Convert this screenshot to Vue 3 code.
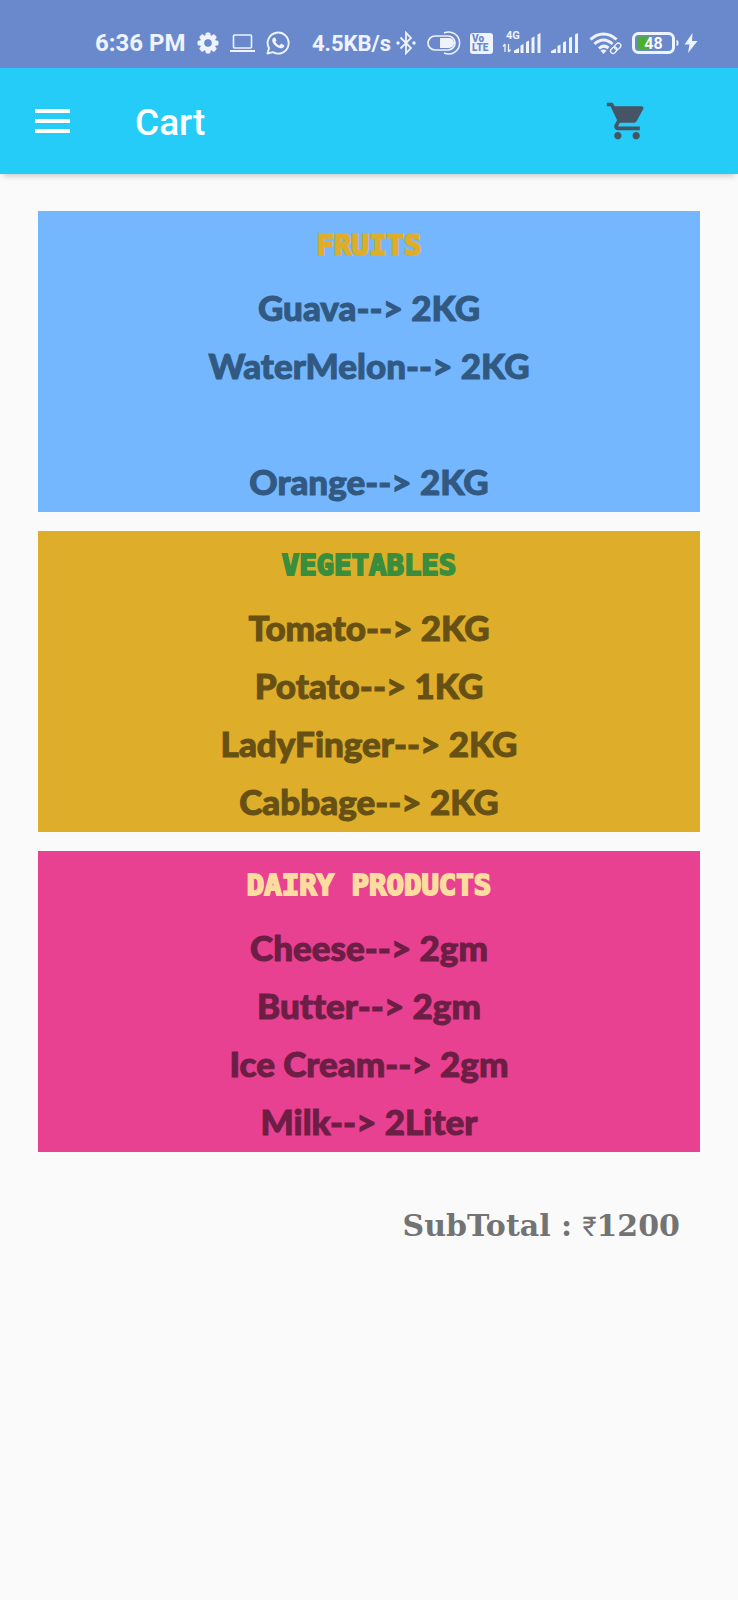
<script setup>
const sections = [
  {
    id: 'fruits',
    title: 'FRUITS',
    items: ['Guava--> 2KG', 'WaterMelon--> 2KG', '', 'Orange--> 2KG'],
  },
  {
    id: 'vegetables',
    title: 'VEGETABLES',
    items: ['Tomato--> 2KG', 'Potato--> 1KG', 'LadyFinger--> 2KG', 'Cabbage--> 2KG'],
  },
  {
    id: 'dairy',
    title: 'DAIRY PRODUCTS',
    items: ['Cheese--> 2gm', 'Butter--> 2gm', 'Ice Cream--> 2gm', 'Milk--> 2Liter'],
  },
]
</script>

<template>
  <div class="screen">
    <div class="status">
      <div class="status-left">
        <span class="clock">6:36 PM</span>
        <svg width="22" height="22" viewBox="0 0 22 22" aria-hidden="true">
          <g fill="#eef3ff">
            <rect x="8.500" y="0.500" width="5" height="21" rx="1.500" />
            <rect x="8.500" y="0.500" width="5" height="21" rx="1.500" transform="rotate(45 11 11)" />
            <rect x="8.500" y="0.500" width="5" height="21" rx="1.500" transform="rotate(90 11 11)" />
            <rect x="8.500" y="0.500" width="5" height="21" rx="1.500" transform="rotate(135 11 11)" />
            <circle cx="11" cy="11" r="8" />
          </g>
          <circle cx="11" cy="11" r="3.800" fill="#6a89cc" />
        </svg>
        <svg width="25" height="20" viewBox="0 0 25 20" fill="none" stroke="#eef3ff" stroke-width="1.6" aria-hidden="true">
          <rect x="3.500" y="2" width="18" height="13" rx="1" />
          <path d="M0 18h25" stroke-width="2" />
        </svg>
        <svg width="24" height="24" viewBox="0 0 24 24" aria-hidden="true">
          <path d="M1.500 22.500L3 17.200A10.500 10.500 0 1 1 7 21.200Z" fill="none" stroke="#eef3ff" stroke-width="1.900" stroke-linejoin="round" />
          <path d="M8.200 6.500c.5-.2 1-.1 1.200.4l.9 2c.2.400 0 .8-.9 1.900 1 1.900 2.300 3 4.200 3.800l1.200-1.500c.3-.4.6-.4 1-.2l2 1c.6.3.6.6.4 1.300-.5 1.500-2 2.300-3.600 2.100-4-.6-7.800-4.300-8.400-7.600-.2-1.300.7-2.700 2-3.200z" fill="#eef3ff" />
        </svg>
      </div>
      <div class="status-right">
        <div class="net">
          <span class="speed">4.5KB/s</span>
          <svg width="22" height="24" viewBox="0 0 22 24" aria-hidden="true">
            <path d="M4.500 6.500L15 17L10 22.200V1.800L15 7L4.500 17.500" fill="none" stroke="#eef3ff" stroke-width="1.800" />
            <circle cx="2" cy="12" r="1.700" fill="#eef3ff" />
            <circle cx="18" cy="12" r="1.700" fill="#eef3ff" />
          </svg>
        </div>
        <svg width="34" height="24" viewBox="0 0 34 24" fill="none" stroke="#eef3ff" aria-hidden="true">
          <rect x="1" y="5" width="27" height="14" rx="7" stroke-width="1.700" />
          <path d="M13 7h9a5 5 0 0 1 0 10H13z" fill="#eef3ff" stroke="none" />
          <path d="M17 2A11 11 0 1 1 17 22" stroke-width="1.500" />
        </svg>
        <span class="volte"><span>Vo</span><span>LTE</span></span>
        <svg width="40" height="26" viewBox="0 0 40 26" aria-hidden="true">
          <text x="4" y="9" class="tiny">4G</text>
          <path d="M3 22V14M1 16.500L3 14M6.500 14V22M8.500 19.500L6.500 22" stroke="#eef3ff" stroke-width="1.300" fill="none" />
          <path d="M12 20.500l5-2.500v5h-5zM18.500 15.500l3-1.500V23h-3zM24 12l3-1.500V23h-3zM29.500 8l3-1.500V23h-3zM35.500 4.500l3-1.500V23h-3z" fill="#eef3ff" />
        </svg>
        <svg width="29" height="26" viewBox="0 0 29 26" aria-hidden="true">
          <path d="M0 21l5-2.500V23H0zM6.500 16l3-1.500V23h-3zM12 12.500l3-1.500V23h-3zM18 8l3-1.500V23h-3zM24 4.500l3-1.500V23h-3z" fill="#eef3ff" />
        </svg>
        <svg width="34" height="26" viewBox="0 0 34 26" fill="none" stroke="#eef3ff" aria-hidden="true">
          <path d="M1.500 9.500C9 2 20 2 27.500 9.500M5.500 14C11 8.500 18 8.500 23.500 14M10 18.500C13 15.500 16.500 15.500 19.500 18" stroke-width="3" />
          <path d="M11.500 20.500l3 3.500 3-3.500q-3-2-6 0z" fill="#eef3ff" stroke="none" />
          <g stroke-width="1.300" transform="rotate(-45 26.500 18.500)">
            <rect x="20.500" y="16" width="7" height="5" rx="2.500" />
            <rect x="26" y="16" width="7" height="5" rx="2.500" />
          </g>
        </svg>
        <div class="power">
          <svg width="47" height="22" viewBox="0 0 47 22" aria-hidden="true">
            <rect x="1.500" y="1.500" width="40" height="19" rx="5" fill="none" stroke="#eef3ff" stroke-width="3" />
            <path d="M5 4.500h15v13H7q-2 0-2-2z" fill="#4caf2f" />
            <path d="M44.500 8q2 0 2 3t-2 3z" fill="#eef3ff" />
            <text x="21.500" y="16.500" text-anchor="middle" class="charge">48</text>
          </svg>
          <svg width="14" height="20" viewBox="0 0 14 20" aria-hidden="true">
            <path d="M8.500 0L.5 11.500h5L4 20l9.500-12H8z" fill="#eef3ff" />
          </svg>
        </div>
      </div>
    </div>

    <header class="bar">
      <button class="icon-button" type="button" aria-label="Menu">
        <svg width="35" height="24" viewBox="0 0 35 24" aria-hidden="true">
          <path d="M0 0h35v4H0zM0 10h35v4H0zM0 20h35v4H0z" fill="#fff" />
        </svg>
      </button>
      <h1>Cart</h1>
      <button class="icon-button cart" type="button" aria-label="Cart">
        <svg width="44" height="44" viewBox="0 0 24 24" aria-hidden="true">
          <path fill="#455565" d="M7 18c-1.100 0-1.990.9-1.990 2S5.900 22 7 22s2-.9 2-2-.9-2-2-2zM1 2v2h2l3.600 7.590-1.350 2.450c-.16.280-.25.610-.25.960 0 1.100.9 2 2 2h12v-2H7.420c-.14 0-.25-.11-.25-.25l.03-.12.900-1.630h7.450c.75 0 1.410-.41 1.750-1.030l3.580-6.490c.08-.14.120-.31.120-.48 0-.55-.45-1-1-1H5.210l-.94-2H1zm16 16c-1.100 0-1.990.9-1.990 2s.89 2 1.990 2 2-.9 2-2-.9-2-2-2z" />
        </svg>
      </button>
    </header>

    <main>
      <section v-for="section in sections" :key="section.id" class="card" :class="section.id">
        <h2>{{ section.title }}</h2>
        <ul>
          <li v-for="(item, i) in section.items" :key="i">{{ item }}</li>
        </ul>
      </section>
      <p class="subtotal">SubTotal : <span class="rupee">₹</span>1200</p>
    </main>
  </div>
</template>

<style>
body {
  background: #fafafa;
}
</style>

<style scoped>
.screen {
  min-height: 100vh;
  background: #fafafa;
  font-family: Roboto, "Liberation Sans", sans-serif;
}
.status {
  display: flex;
  justify-content: space-between;
  align-items: center;
  box-sizing: border-box;
  height: 68px;
  padding: 18px 40px 0 95px;
  background: #6a89cc;
  color: #eef3ff;
  font-weight: 700;
  white-space: nowrap;
}
.status svg {
  display: block;
  flex: none;
}
.clock {
  font-size: 24px;
}
.speed {
  font-size: 22px;
}
.status-left {
  display: flex;
  align-items: center;
  gap: 11px;
}
.status-right {
  display: flex;
  align-items: center;
  gap: 9px;
}
.net,
.power {
  display: flex;
  align-items: center;
  gap: 5px;
}
.volte {
  display: flex;
  flex-direction: column;
  align-items: flex-start;
  justify-content: center;
  box-sizing: border-box;
  width: 23px;
  height: 21px;
  padding-left: 2px;
  border-radius: 3px;
  background: #eef3ff;
  color: #6a89cc;
  font-size: 10px;
  font-weight: 900;
  line-height: 9px;
}
.tiny {
  fill: #eef3ff;
  font-size: 11px;
  font-weight: 700;
}
.charge {
  fill: #fff;
  font-size: 16px;
  font-weight: 600;
}
.bar {
  display: flex;
  align-items: center;
  box-sizing: border-box;
  height: 106px;
  padding: 0 89px 0 35px;
  background: #25ccf7;
  box-shadow: 0 5px 6px -3px rgba(0, 0, 0, 0.2);
}
.icon-button {
  display: block;
  padding: 0;
  border: 0;
  background: none;
}
.icon-button svg {
  display: block;
}
.cart {
  margin-left: auto;
}
h1 {
  margin: 4px 0 0 65px;
  color: #fff;
  font-size: 37px;
  font-weight: 500;
  line-height: 44px;
}
main {
  display: flex;
  flex-direction: column;
  gap: 19px;
  padding: 37px 38px;
}
.card {
  text-align: center;
}
h2 {
  margin: 0;
  font-family: "DejaVu Sans Mono", monospace;
  font-size: 29px;
  font-weight: 700;
  line-height: 69px;
  -webkit-text-stroke: 2px currentColor;
}
ul {
  margin: 0;
  padding: 0;
  list-style: none;
}
li {
  height: 58px;
  color: #315981;
  font-family: Lato, sans-serif;
  font-size: 35px;
  font-weight: 900;
  font-variant-ligatures: none;
  line-height: 54px;
  -webkit-text-stroke: 1px currentColor;
}
.fruits {
  background: #74b7ff;
}
.fruits h2 {
  color: #deae2b;
}
.vegetables {
  background: #deae2b;
}
.vegetables h2 {
  color: #388e3c;
}
.vegetables li {
  color: #675014;
}
.dairy {
  background: #e84191;
}
.dairy h2 {
  color: #fddc9f;
}
.dairy li {
  color: #6d1e45;
}
.subtotal {
  margin: 35px 20px 0;
  color: #737373;
  font-family: "DejaVu Serif", serif;
  font-size: 30px;
  font-weight: 700;
  line-height: 40px;
  text-align: right;
}
.rupee {
  font-family: Roboto, sans-serif;
  font-size: 27px;
  font-weight: 400;
}
</style>
